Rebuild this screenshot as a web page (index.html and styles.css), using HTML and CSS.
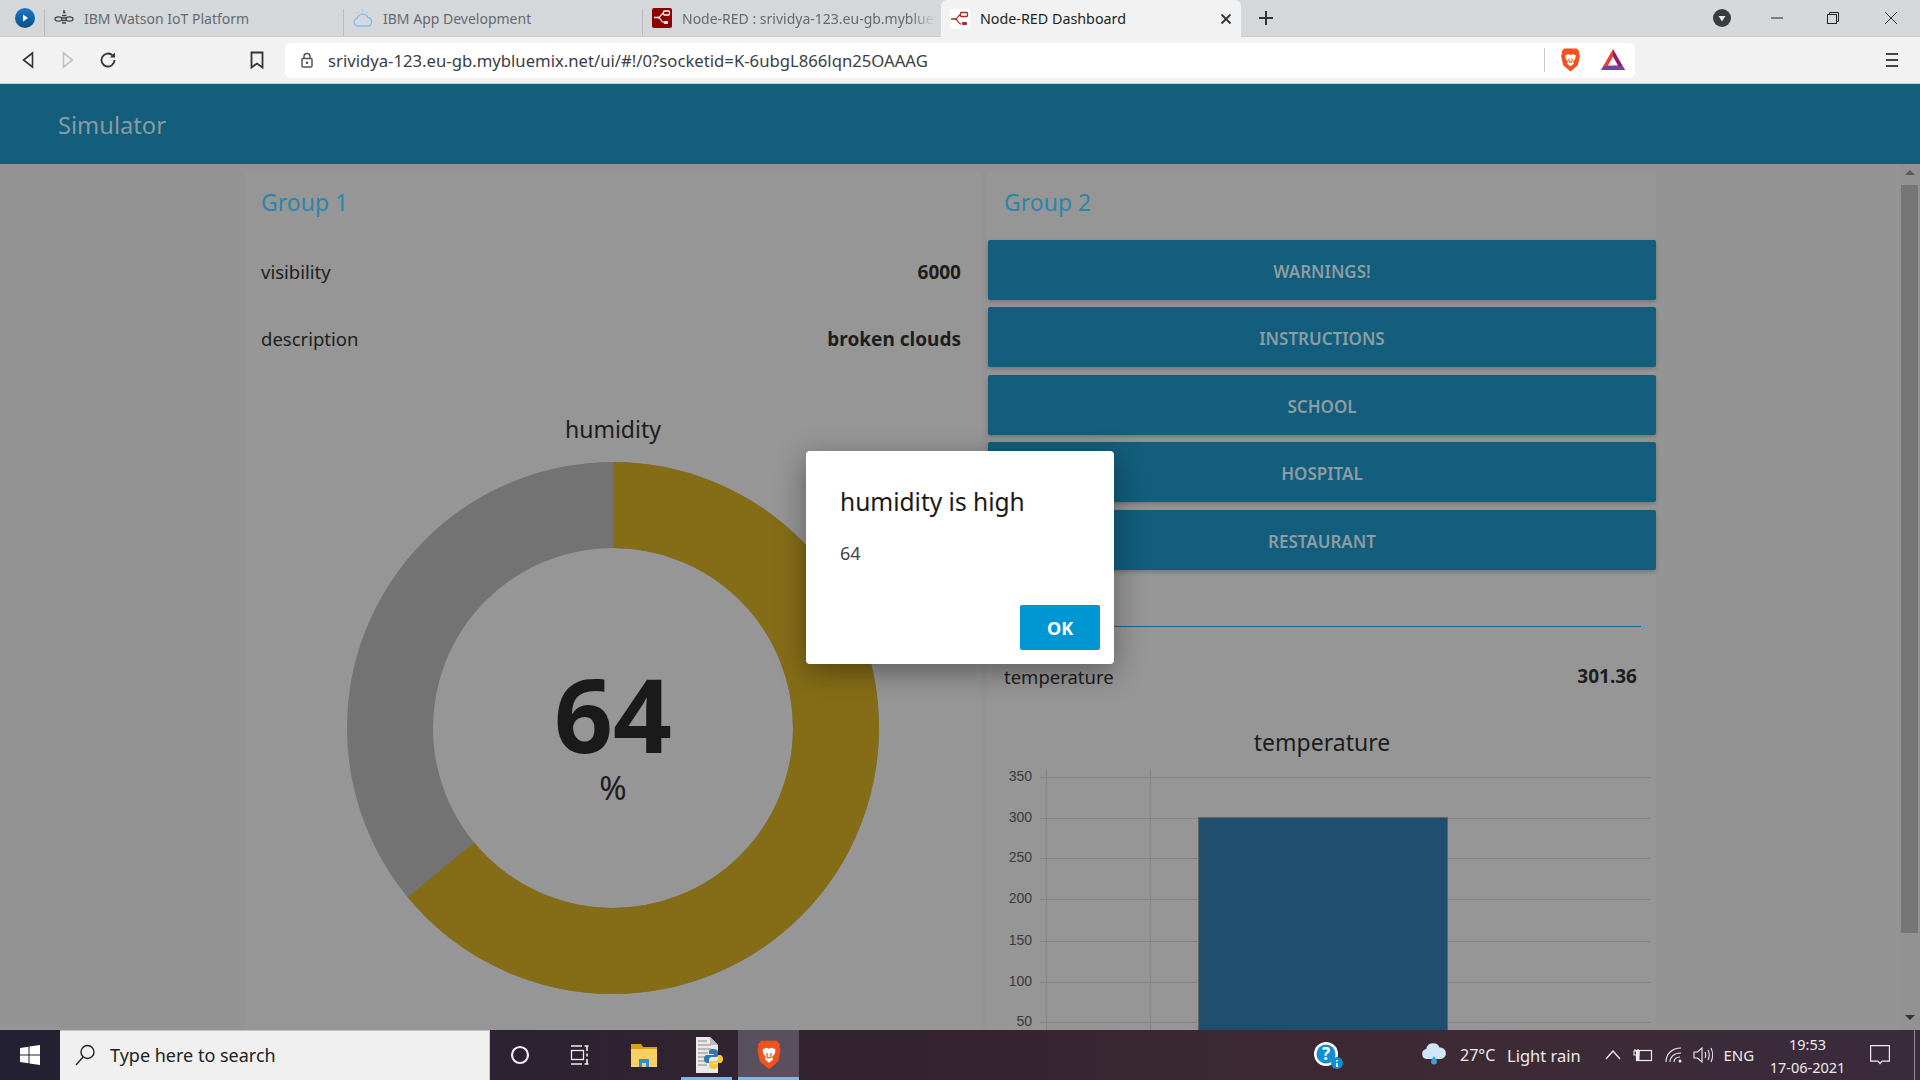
FILE: index.html
```html
<!DOCTYPE html>
<html lang="en">
<head>
    <meta charset="UTF-8">
    <title>Node-RED Dashboard</title>
    <link rel="stylesheet" href="styles.css">
</head>
<body>
    <!-- browser tabs -->
    <div class="tabstrip">
        <div class="media-slot">
            <svg width="20" height="20" viewBox="0 0 20 20"><defs><linearGradient id="mediaBlue" x1="0" y1="0" x2="0" y2="1"><stop offset="0" stop-color="#1b78c4"/><stop offset="1" stop-color="#0b4f86"/></linearGradient></defs><circle cx="10" cy="10" r="10" fill="url(#mediaBlue)"/><path d="M8 6.500l5 3.500-5 3.500z" fill="#fff"/></svg>
        </div>
        <div class="tab">
            <svg class="favicon" viewBox="0 0 20 20" fill="none" stroke="#444" stroke-width="1.200"><ellipse cx="4.500" cy="11" rx="3.500" ry="2.200"/><ellipse cx="15.500" cy="11" rx="3.500" ry="2.200"/><path d="M8 7.500h4.500M7.500 10h5M7.500 12.500h5M8 15h4M9 4.500h2.500" stroke-width="1.600"/><circle cx="10" cy="3" r="1" fill="#444" stroke="none"/></svg>
            <span class="tab-title">IBM Watson IoT Platform</span>
        </div>
        <div class="tab">
            <svg class="favicon" viewBox="0 0 20 20" fill="none" stroke="#7cc0ea" stroke-width="1.300"><path d="M5 18a4 4 0 0 1-.6-7.900 5.500 5.500 0 0 1 10.400-.6A4.300 4.300 0 0 1 15 18z"/><path d="M4 4l1.500 1.500M9.500 1v2.500M15 4l-1.500 1.500" stroke="#9ad0f0"/></svg>
            <span class="tab-title">IBM App Development</span>
        </div>
        <div class="tab">
            <svg class="favicon" viewBox="0 0 20 20"><rect width="20" height="20" rx="2" fill="#8f0000"/><path d="M2 9.500h4c3 0 3-4.500 6-4.500M6 9.500c3 0 3 5 6 5" fill="none" stroke="#fff" stroke-width="1.300"/><rect x="11.500" y="3" width="6" height="4" rx="1" fill="none" stroke="#fff" stroke-width="1.300"/><rect x="12" y="13" width="4" height="3" rx="1" fill="#fff"/></svg>
            <span class="tab-title tab-title-fade">Node-RED : srividya-123.eu-gb.mybluemix.net</span>
        </div>
        <div class="tab tab-active">
            <svg class="favicon" viewBox="0 0 20 20"><rect width="20" height="20" rx="2" fill="#fff"/><path d="M1 10h4c3 0 3-4.500 6-4.500M5 10c3 0 3 5 6 5" fill="none" stroke="#a52a2a" stroke-width="1.300"/><rect x="10.500" y="3.500" width="7" height="4" rx="1" fill="none" stroke="#a52a2a" stroke-width="1.300"/><rect x="12" y="13" width="5" height="3" rx="1" fill="#a52a2a"/></svg>
            <span class="tab-title">Node-RED Dashboard</span>
            <svg class="tab-close" width="12" height="12" viewBox="0 0 12 12"><path d="M1.500 1.500l9 9M10.500 1.500l-9 9" stroke="#333" stroke-width="1.800"/></svg>
        </div>
        <div class="new-tab">
            <svg width="16" height="16" viewBox="0 0 16 16"><path d="M8 1v14M1 8h14" stroke="#333" stroke-width="2"/></svg>
        </div>
        <div class="strip-space"></div>
        <div class="caret-slot">
            <svg width="18" height="18" viewBox="0 0 18 18"><circle cx="9" cy="9" r="9" fill="#3c3c3c"/><path d="M5.500 7h7L9 12.500z" fill="#e8e8e8"/></svg>
        </div>
        <div class="win-btn"><svg width="14" height="14" viewBox="0 0 14 14"><path d="M1 7h12" stroke="#222" stroke-width="1"/></svg></div>
        <div class="win-btn"><svg width="14" height="14" viewBox="0 0 14 14" fill="none" stroke="#222"><rect x="1.500" y="3.500" width="9" height="9"/><path d="M3.500 3.500v-2h9v9h-2"/></svg></div>
        <div class="win-btn win-close"><svg width="14" height="14" viewBox="0 0 14 14"><path d="M1 1l12 12M13 1L1 13" stroke="#333" stroke-width="1"/></svg></div>
    </div>

    <!-- address bar row -->
    <div class="toolbar">
        <div class="nav-btn"><svg width="14" height="18" viewBox="0 0 14 18" fill="none" stroke="#333" stroke-width="1.600"><path d="M11.500 2L2.500 9l9 7z"/></svg></div>
        <div class="nav-btn"><svg width="14" height="18" viewBox="0 0 14 18" fill="none" stroke="#c2c2c2" stroke-width="1.600"><path d="M2.500 2l9 7-9 7z"/></svg></div>
        <div class="nav-btn"><svg width="18" height="18" viewBox="0 0 18 18" fill="none" stroke="#333" stroke-width="1.800"><path d="M15.500 9a6.500 6.500 0 1 1-2-4.700"/><path d="M16 1.500v5h-5z" fill="#333" stroke="none"/></svg></div>
        <div class="nav-btn bookmark"><svg width="14" height="18" viewBox="0 0 14 18" fill="none" stroke="#333" stroke-width="1.800"><path d="M1.500 1.500h11v15L7 12.500l-5.500 4z"/></svg></div>
        <div class="address">
            <svg class="lock" width="12" height="16" viewBox="0 0 12 16"><path d="M3 7V4.500a3 3 0 0 1 6 0V7" fill="none" stroke="#555" stroke-width="1.500"/><rect x="1" y="6.500" width="10" height="8.500" rx="1" fill="none" stroke="#555" stroke-width="1.500"/><circle cx="6" cy="10.800" r="1.300" fill="#555"/></svg>
            <span class="url">srividya-123.eu-gb.mybluemix.net/ui/#!/0?socketid=K-6ubgL866lqn25OAAAG</span>
            <span class="address-sep"></span>
            <svg class="brave-shield" width="21" height="26" viewBox="0 0 20 24"><path d="M4 1h12l2.500 3-.5 2 1 2-2 9-7 6-7-6-2-9 1-2-.5-2z" fill="#f4511e"/><path d="M5 7.500l3-1 2 .7 2-.7 3 1-.6 3.500-2 2.500.8 2L10 18l-3.200-2.500.8-2-2-2.500z" fill="#fff"/><path d="M8.500 10.500v3M11.500 10.500v3M8.500 14h3" stroke="#f4511e" stroke-width="1" fill="none"/></svg>
            <svg class="bat" width="24" height="22" viewBox="0 0 24 22"><path d="M12 0L0 21h12z" fill="#e8412d"/><path d="M12 0l12 21H12z" fill="#8a1f6d"/><path d="M0 21l3-4h18l3 4z" fill="#7d3f9d"/><path d="M12 7.500L7 16.500h10z" fill="#fff"/></svg>
        </div>
        <div class="menu-btn"><span></span><span></span><span></span></div>
    </div>

    <div class="app-header"><span class="app-title">Simulator</span></div>

    <div class="main">
        <div class="group group-left">
            <div class="group-head">Group 1</div>
            <div class="row"><span class="row-label">visibility</span><span class="row-value">6000</span></div>
            <div class="row"><span class="row-label">description</span><span class="row-value">broken clouds</span></div>
            <div class="widget-title title-humidity">humidity</div>
            <div class="gauge">
                <svg width="532" height="532" viewBox="0 0 532 532">
                    <circle cx="266" cy="266" r="223" fill="none" stroke="#737373" stroke-width="86"/>
                    <circle class="gauge-arc" cx="266" cy="266" r="223" fill="none" stroke="#856d17" stroke-width="86" stroke-dasharray="896.800 1401.200"/>
                    <text class="gauge-value" x="266" y="291" text-anchor="middle">64</text>
                    <text class="gauge-unit" x="266" y="338" text-anchor="middle">%</text>
                </svg>
            </div>
        </div>

        <div class="group group-right">
            <div class="group-head">Group 2</div>
            <div class="btn-list">
                <div class="dash-btn">WARNINGS!</div>
                <div class="dash-btn">INSTRUCTIONS</div>
                <div class="dash-btn">SCHOOL</div>
                <div class="dash-btn">HOSPITAL</div>
                <div class="dash-btn">RESTAURANT</div>
            </div>
            <div class="divider"></div>
            <div class="row row-temp"><span class="row-label">temperature</span><span class="row-value">301.36</span></div>
            <div class="widget-title title-temp">temperature</div>
            <svg class="chart" width="668" height="280" viewBox="0 0 668 280">
                <g class="grid">
                    <path d="M52 17.500H662M52 58.500H662M52 98.500H662M52 139.500H662M52 181.500H662M52 222.500H662M52 262.500H662"/>
                    <path class="grid-v" d="M58.500 9V280M162.500 9V280"/>
                </g>
                <rect class="bar" x="210.500" y="57.500" width="249" height="240"/>
                <g class="ticks">
                    <text x="44" y="21">350</text>
                    <text x="44" y="62">300</text>
                    <text x="44" y="102">250</text>
                    <text x="44" y="143">200</text>
                    <text x="44" y="185">150</text>
                    <text x="44" y="226">100</text>
                    <text x="44" y="266">50</text>
                </g>
            </svg>
        </div>

        <div class="scrollbar">
            <div class="scroll-up"></div>
            <div class="scroll-thumb"></div>
            <div class="scroll-down"></div>
        </div>

        <div class="dialog">
            <div class="dialog-title">humidity is high</div>
            <div class="dialog-body">64</div>
            <div class="dialog-actions"><div class="dialog-ok">OK</div></div>
        </div>
    </div>

    <!-- windows taskbar -->
    <div class="taskbar">
        <div class="start-btn">
            <svg width="20" height="20" viewBox="0 0 20 20" fill="#fff"><path d="M0 3l8.500-1.200v7.700H0zM9.500 1.600L20 0v9.500H9.500zM0 10.500h8.500v7.700L0 17zM9.500 10.500H20V20L9.500 18.400z"/></svg>
        </div>
        <div class="search-box">
            <svg width="22" height="24" viewBox="0 0 22 24" fill="none" stroke="#222" stroke-width="1.400"><circle cx="13.500" cy="9" r="6.500"/><path d="M9 14L2 22"/></svg>
            <span class="search-text">Type here to search</span>
        </div>
        <div class="task-btn">
            <svg width="20" height="20" viewBox="0 0 20 20" fill="none" stroke="#eee" stroke-width="2.200"><circle cx="10" cy="10" r="8"/></svg>
        </div>
        <div class="task-btn">
            <svg width="20" height="20" viewBox="0 0 20 20" fill="none" stroke="#eee" stroke-width="1.300"><path d="M1 1h11M1 19h11M14.500 1h4M14.500 19h4"/><rect x="1.500" y="5.500" width="12" height="9"/><path d="M17 1v5M17 14v5M17 8.500v3" stroke-width="1.600"/></svg>
        </div>
        <div class="task-btn task-explorer">
            <svg width="28" height="26" viewBox="0 0 28 26"><path d="M1 2h10l2 3h14v4H1z" fill="#d9a21b"/><rect x="1" y="7" width="26" height="18" fill="#f8d163"/><path d="M9 25v-8h10v8h-3v-4h-4v4z" fill="#2e8fd4"/></svg>
        </div>
        <div class="task-btn task-open">
            <svg width="30" height="36" viewBox="0 0 30 36"><path d="M3 0h14l8 8v28H3z" fill="#e9e9ea"/><path d="M5 4h9M5 8h13M5 12h13M5 16h10M5 20h8M5 24h8M5 28h9" stroke="#a9a9ad" stroke-width="1.500"/><path d="M17 0v8h8z" fill="#bbb"/><path d="M20 12c-4 0-4 2-4 3v2h5v1h-7c-2 0-3 2-3 4s1 4 3 4h2v-3c0-2 1-3 3-3h4c2 0 2-1 2-2v-3c0-2-2-3-5-3z" fill="#2e78b5"/><path d="M21 32c4 0 4-2 4-3v-2h-5v-1h7c2 0 3-2 3-4s-1-4-3-4h-2v3c0 2-1 3-3 3h-4c-2 0-2 1-2 2v3c0 2 2 3 5 3z" fill="#f5c93c"/></svg>
        </div>
        <div class="task-btn task-active">
            <svg width="26" height="32" viewBox="0 0 20 24"><path d="M4 1h12l2.500 3-.5 2 1 2-2 9-7 6-7-6-2-9 1-2-.5-2z" fill="#f4511e"/><path d="M5 7.500l3-1 2 .7 2-.7 3 1-.6 3.500-2 2.500.8 2L10 18l-3.200-2.500.8-2-2-2.500z" fill="#fff"/><path d="M8.500 10.500v3M11.500 10.500v3M8.500 14h3" stroke="#f4511e" stroke-width="1" fill="none"/></svg>
        </div>
        <div class="task-space"></div>
        <div class="tray-help">
            <svg width="30" height="30" viewBox="0 0 30 30"><circle cx="13" cy="14" r="12" fill="#fff"/><circle cx="13" cy="14" r="9.500" fill="#0f8fd6"/><text class="help-mark" x="13" y="20" text-anchor="middle">?</text><circle cx="24" cy="23" r="6" fill="#0f8fd6"/><path d="M24 20v1.500M24 23v4" stroke="#fff" stroke-width="1.800"/></svg>
        </div>
        <div class="tray-weather">
            <svg width="26" height="24" viewBox="0 0 26 24"><path d="M6 18a5 5 0 0 1-.8-9.900A7 7 0 0 1 18.500 6.500 5.800 5.800 0 0 1 20 18z" fill="#cfe6f7"/><path d="M13 15c-2 3-3 4-3 5.500a3 3 0 0 0 6 0C16 19 15 18 13 15z" fill="#3f9ddc"/></svg>
        </div>
        <span class="tray-temp">27°C</span>
        <span class="tray-cond">Light rain</span>
        <div class="tray-chevron"><svg width="16" height="10" viewBox="0 0 16 10" fill="none" stroke="#eee" stroke-width="1.300"><path d="M1 9l7-8 7 8"/></svg></div>
        <div class="tray-icon"><svg width="20" height="14" viewBox="0 0 20 14" fill="none" stroke="#eee" stroke-width="1.200"><rect x="3.500" y="2.500" width="15" height="10"/><path d="M1 3h5v4H1zM2 1v2M5 1v2M3.500 7v6" stroke-width="1.100"/><rect x="4" y="3" width="2.500" height="9" fill="#eee" stroke="none"/></svg></div>
        <div class="tray-icon tray-wifi"><svg width="18" height="16" viewBox="0 0 18 16" fill="none" stroke="#eee" stroke-width="1.100"><path d="M1 15C1 7 7 1 16 1M5 15c0-5 4-9 11-9M9 15c0-3 2-5 6-5"/><circle cx="15" cy="14" r="1.500" fill="#eee" stroke="none"/></svg></div>
        <div class="tray-icon tray-sound"><svg width="20" height="18" viewBox="0 0 20 18" fill="none" stroke="#eee" stroke-width="1.100"><path d="M1 6h3.500L9 2v14l-4.500-4H1z"/><path d="M12 6c1 2 1 4 0 6M15 4c1.500 3 1.500 7 0 10M18 2c2 4 2 10 0 14"/></svg></div>
        <span class="tray-lang">ENG</span>
        <div class="tray-clock"><span>19:53</span><span>17-06-2021</span></div>
        <div class="tray-notify"><svg width="20" height="20" viewBox="0 0 20 20" fill="none" stroke="#eee" stroke-width="1.200"><path d="M.600.600h18.800v15.500H12l-2 2.500-2-2.500H.600z"/></svg></div>
        <div class="show-desktop"></div>
    </div>
</body>
</html>
```

FILE: styles.css
```css
* {
    box-sizing: border-box;
}
body {
    margin: 0;
    width: 1920px;
    height: 1080px;
    overflow: hidden;
    display: flex;
    flex-direction: column;
    font-family: "Noto Sans", sans-serif;
    background: #949494;
    color: #1e1e1e;
}

/* tabs */
.tabstrip {
    height: 37px;
    flex: none;
    display: flex;
    align-items: stretch;
    background: #d5d8db;
    border-bottom: 1px solid #c9cccf;
}
.media-slot {
    width: 44px;
    padding-left: 15px;
    display: flex;
    align-items: center;
}
.tab {
    position: relative;
    width: 299px;
    padding-left: 10px;
    display: flex;
    align-items: center;
    font-size: 14px;
    color: #64696e;
}
.tab::before {
    content: "";
    position: absolute;
    left: 0;
    top: 9px;
    bottom: 0;
    width: 1px;
    background: #b9bcbf;
}
.tab-active {
    width: 300px;
    height: 37px;
    background: #f2f2f2;
    border-radius: 6px 6px 0 0;
    color: #222;
    font-size: 14.300px;
    padding-left: 9px;
}
.tab-active::before {
    display: none;
}
.favicon {
    width: 20px;
    height: 20px;
    flex: none;
    margin-right: 10px;
}
.tab-title {
    white-space: nowrap;
    overflow: hidden;
}
.tab-title-fade {
    width: 254px;
    mask-image: linear-gradient(to right, #000 90%, transparent);
}
.tab-close {
    margin-left: auto;
    margin-right: 9px;
}
.new-tab {
    width: 50px;
    display: flex;
    align-items: center;
    justify-content: center;
}
.strip-space {
    flex: 1;
}
.caret-slot {
    width: 40px;
    margin-right: 7px;
    display: flex;
    align-items: center;
    justify-content: center;
}
.win-btn {
    width: 56px;
    display: flex;
    align-items: center;
    justify-content: center;
}
.win-close {
    width: 59px;
}

/* toolbar */
.toolbar {
    height: 47px;
    flex: none;
    display: flex;
    align-items: center;
    padding-left: 8px;
    background: #f2f2f2;
    border-bottom: 1px solid #d0d0d0;
}
.nav-btn {
    width: 40px;
    display: flex;
    justify-content: center;
}
.bookmark {
    margin-left: 109px;
}
.address {
    width: 1350px;
    height: 35px;
    margin-left: 8px;
    padding-left: 16px;
    display: flex;
    align-items: center;
    background: #fff;
    border-radius: 6px;
}
.url {
    margin-left: 15px;
    font-size: 16.700px;
    color: #3c4043;
    white-space: nowrap;
}
.address-sep {
    width: 1px;
    height: 24px;
    margin-left: auto;
    background: #c8c8c8;
}
.brave-shield {
    margin-left: 15px;
}
.bat {
    margin-left: 20px;
    margin-right: 10px;
}
.menu-btn {
    width: 12px;
    margin-left: 251px;
    display: flex;
    flex-direction: column;
    gap: 4px;
}
.menu-btn span {
    height: 2px;
    background: #444;
}

/* dashboard header */
.app-header {
    height: 80px;
    flex: none;
    display: flex;
    align-items: center;
    padding: 1px 0 0 58px;
    background: #125e7c;
}
.app-title {
    font-size: 23.700px;
    color: #8b9aa2;
}

/* dashboard body */
.main {
    position: relative;
    flex: 1;
    min-height: 0;
    overflow: hidden;
    display: flex;
    padding: 8px 0 0 245px;
    background: #949494;
}
.group {
    background: #969696;
}
.group-left {
    width: 736px;
    padding: 0 16px;
}
.group-right {
    width: 669px;
    margin-left: 6px;
    padding: 0 0 0 1px;
}
.group-head {
    height: 68px;
    padding: 12px 0 0 16px;
    font-size: 23px;
    line-height: 36px;
    color: #2b86ab;
}
.group-left .group-head {
    padding-left: 0;
    height: 66px;
}
.row {
    height: 67px;
    display: flex;
    align-items: center;
    justify-content: space-between;
    font-size: 18.500px;
}
.group-left .row {
    padding-right: 4px;
}
.row-value {
    font-size: 19px;
    font-weight: 700;
}
.widget-title {
    height: 34px;
    line-height: 34px;
    text-align: center;
    font-size: 23px;
    color: #1c1c1c;
}
.title-humidity {
    margin-top: 40px;
}
.gauge {
    margin-top: 16px;
    display: flex;
    justify-content: center;
}
.gauge-arc {
    transform: rotate(-90deg);
    transform-origin: 266px 266px;
}
.gauge-value {
    font-size: 103px;
    font-weight: 700;
    fill: #1a1a1a;
}
.gauge-unit {
    font-size: 33px;
    fill: #1e1e1e;
}
.btn-list {
    display: flex;
    flex-direction: column;
    gap: 7.400px;
}
.dash-btn {
    height: 60px;
    display: flex;
    align-items: center;
    justify-content: center;
    padding-top: 3px;
    background: #125e7c;
    border-radius: 2px;
    box-shadow: 0 2px 4px rgba(0, 0, 0, 0.22);
    font-size: 17px;
    font-weight: 600;
    color: #8e9ca3;
}
.divider {
    height: 1px;
    margin: 56px 15px 0 16px;
    background: #146a8c;
}
.row-temp {
    margin-top: 16px;
    padding: 0 19px 0 16px;
}
.title-temp {
    margin-top: 15px;
}
.chart {
    display: block;
    margin-top: 1px;
}
.grid path {
    fill: none;
    stroke: #838383;
    stroke-width: 1;
}
.grid .grid-v {
    stroke: #858585;
}
.bar {
    fill: #1f4e6f;
    stroke: #5d6668;
}
.ticks text {
    font-family: "Liberation Sans", sans-serif;
    font-size: 14px;
    text-anchor: end;
    fill: #3a3a3a;
}

/* scrollbar */
.scrollbar {
    position: absolute;
    right: 0;
    top: 0;
    bottom: 0;
    width: 21px;
    padding: 6px 2px 0;
    display: flex;
    flex-direction: column;
    align-items: center;
    background: #929292;
}
.scroll-up {
    width: 0;
    height: 0;
    border: 5px solid transparent;
    border-top: 0;
    border-bottom: 5px solid #5c5c5c;
    flex: none;
}
.scroll-thumb {
    width: 17px;
    height: 748px;
    margin-top: 10px;
    flex: none;
    background: #757575;
}
.scroll-down {
    width: 0;
    height: 0;
    margin-top: 82px;
    border: 5px solid transparent;
    border-bottom: 0;
    border-top: 5px solid #333;
    flex: none;
}

/* alert dialog */
.dialog {
    position: absolute;
    left: 806px;
    top: 287px;
    width: 308px;
    height: 213px;
    padding: 34px 14px 14px 34px;
    display: flex;
    flex-direction: column;
    background: #fff;
    border-radius: 4px;
    box-shadow: 0 8px 30px rgba(0, 0, 0, 0.38);
}
.dialog-title {
    font-size: 24.500px;
    line-height: 34px;
    color: #1a1a1a;
}
.dialog-body {
    margin-top: 21px;
    font-size: 18px;
    line-height: 26px;
    color: #444;
}
.dialog-actions {
    margin-top: auto;
    display: flex;
    justify-content: flex-end;
}
.dialog-ok {
    width: 80px;
    height: 45px;
    display: flex;
    align-items: center;
    justify-content: center;
    background: #0095d3;
    border-radius: 2px;
    color: #fff;
    font-size: 18px;
    font-weight: 700;
}

/* taskbar */
.taskbar {
    height: 50px;
    flex: none;
    display: flex;
    align-items: center;
    background: linear-gradient(to right, #232033, #33232f 45%, #3e2a34 75%, #3a2b3d);
    color: #ececec;
    font-size: 16px;
}
.start-btn {
    width: 60px;
    display: flex;
    justify-content: center;
}
.search-box {
    width: 430px;
    height: 50px;
    padding: 0 0 2px 14px;
    display: flex;
    align-items: center;
    background: #f0f0f0;
    border: 1px solid #c4c4c4;
    border-width: 1px 1px 0 0;
}
.search-text {
    margin-left: 14px;
    font-size: 18px;
    color: #222;
}
.task-btn {
    position: relative;
    width: 60px;
    height: 50px;
    flex: none;
    display: flex;
    align-items: center;
    justify-content: center;
}
.task-explorer {
    width: 68px;
}
.task-open::after,
.task-active::after {
    content: "";
    position: absolute;
    left: 3px;
    right: 6px;
    bottom: 0;
    height: 3px;
    background: #7cb8e4;
}
.task-active {
    width: 61px;
    background: #59505e;
}
.task-active::after {
    left: 0;
    right: 0;
}
.task-space {
    flex: 1;
}
.tray-help {
    width: 54px;
    display: flex;
    justify-content: center;
}
.help-mark {
    font-size: 17px;
    font-weight: 700;
    fill: #fff;
}
.tray-weather {
    width: 26px;
    margin-left: 66px;
}
.tray-temp {
    margin-left: 13px;
    width: 47px;
}
.tray-cond {
    width: 73.500px;
    font-size: 16.500px;
    white-space: nowrap;
}
.tray-chevron {
    margin-left: 24px;
    width: 16px;
    display: flex;
}
.tray-icon {
    margin-left: 12px;
    display: flex;
}
.tray-wifi {
    margin-left: 12px;
}
.tray-sound {
    margin-left: 10px;
}
.tray-lang {
    margin-left: 11px;
    width: 32px;
    font-size: 15px;
}
.tray-clock {
    width: 90px;
    margin-left: 7px;
    display: flex;
    flex-direction: column;
    align-items: center;
    gap: 3px;
    font-size: 14.500px;
    line-height: 20px;
}
.tray-notify {
    width: 50px;
    margin-left: 2.500px;
    display: flex;
    justify-content: center;
}
.show-desktop {
    width: 15px;
    height: 50px;
    background: linear-gradient(#8f8a90, #8f8a90) 9px 0 / 1px 100% no-repeat;
}
```
